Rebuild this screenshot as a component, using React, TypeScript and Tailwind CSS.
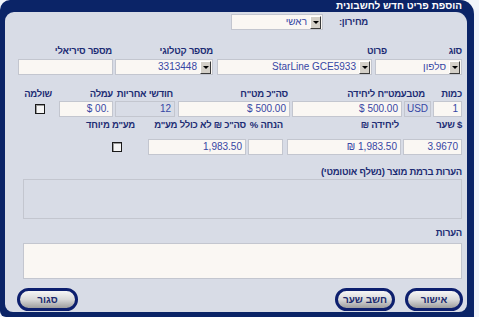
import { ReactNode } from 'react';

const DropBtn = () => (
  <div className="w-[11px] h-[13px] mr-px shrink-0 bg-[#d4d0c8] border border-t-white border-l-white border-r-[#3a3a3a] border-b-[#3a3a3a] flex items-center justify-center">
    <div className="w-0 h-0 border-l-[3px] border-r-[3px] border-t-[3px] border-l-transparent border-r-transparent border-t-black" />
  </div>
);

const Select = ({ className, children }: { className: string; children: ReactNode }) => (
  <div
    className={`h-[16px] shrink-0 border border-[#c3c6cf] bg-[#faf7f3] flex items-center text-[10px] font-normal tracking-normal text-[#3646a4] whitespace-nowrap ${className}`}
  >
    <DropBtn />
    <span className="mr-[3px]">{children}</span>
  </div>
);

const Field = ({
  className,
  children,
  disabled,
}: {
  className: string;
  children?: ReactNode;
  disabled?: boolean;
}) => (
  <div
    className={`h-[16px] shrink-0 border border-[#c3c6cf] flex items-center px-[3px] text-[10px] font-normal tracking-normal text-[#3646a4] whitespace-nowrap ${
      disabled ? 'bg-[#d8dce6]' : 'bg-[#faf7f3]'
    } ${className}`}
  >
    {children}
  </div>
);

const Check = ({ className }: { className: string }) => (
  <div
    className={`w-[10px] h-[10px] shrink-0 self-center border border-[#1a1a1a] bg-[#f4f4f4] shadow-[inset_1px_1px_0_#9a9a9a] ${className}`}
  />
);

const PillButton = ({ className, children }: { className: string; children: ReactNode }) => (
  <div
    className={`h-[23px] rounded-full border-[3px] border-[#0d1f6e] bg-gradient-to-b from-[#f6f6f6] via-[#d9d9d9] to-[#9e9e9e] flex items-center justify-center text-[10px] font-bold tracking-normal text-[#1a2a6e] ${className}`}
  >
    {children}
  </div>
);

export default function App() {
  return (
    <div className="w-[479px] h-[317px] bg-[#f2f5fa] overflow-hidden font-['Liberation_Sans',Arial,sans-serif]">
      <div
        dir="rtl"
        className="w-[474px] h-[317px] bg-[#0b2467] rounded-tl-[10px] rounded-tr-[14px] rounded-bl-[6px] flex flex-col pl-[5px] pr-[7px] pb-[5px]"
      >
        <div className="h-[12px] pr-[5px] text-white font-bold text-[10px] leading-[12px] whitespace-nowrap">
          הוספת פריט חדש לחשבונית
        </div>

        <div className="flex-1 bg-[#d8dce6] rounded-tl-[9px] rounded-tr-[11px] rounded-b-[8px] pr-[5px] flex flex-col text-[9.5px] leading-[12px] tracking-[-0.25px] font-bold text-[#1c2c74] whitespace-nowrap">
          {/* price list */}
          <div className="flex items-center mt-[2px] mr-[94px] h-[16px]">
            <div className="w-[45px]">מחירון:</div>
            <Select className="w-[92px]">ראשי</Select>
          </div>

          {/* row 2 */}
          <div className="flex mt-[15px] h-[12px]">
            <div className="w-[74px]">סוג</div>
            <div className="w-[175px] pr-px">פרוט</div>
            <div className="w-[100px]">מספר קטלוגי</div>
            <div className="pr-px">מספר סיריאלי</div>
          </div>
          <div className="flex mt-[2px] h-[16px]">
            <Select className="w-[87px]">סלפון</Select>
            <Select className="w-[155px] mr-[3px]">StarLine GCE5933</Select>
            <Select className="w-[98px] mr-[4px]">3313448</Select>
            <Field className="w-[95px] mr-[2px]" />
          </div>

          {/* row 3 */}
          <div className="flex mt-[13px] h-[12px]">
            <div className="w-[32px]">כמות</div>
            <div className="w-[28px] pr-[5px]">מטבע</div>
            <div className="w-[112px] pr-px">מט"ח ליחידה</div>
            <div className="w-[115px] pr-[2px]">סה"כ מט"ח</div>
            <div className="w-[62px] pr-[2px]">חודשי אחריות</div>
            <div className="w-[58px]">עמלה</div>
            <div className="pr-[3px]">שולמה</div>
          </div>
          <div className="flex mt-[1px] h-[16px]">
            <Field className="w-[29px]">1</Field>
            <Field className="w-[27px] mr-[2px] justify-center text-[#5a68a8]" disabled>
              USD
            </Field>
            <Field className="w-[110px] mr-[2px]">500.00 $</Field>
            <Field className="w-[112px] mr-[2px]">500.00 $</Field>
            <Field className="w-[60px] mr-[3px]" disabled>
              12
            </Field>
            <Field className="w-[54px] mr-[2px]">.00 $</Field>
            <Check className="mr-[14px]" />
          </div>

          {/* row 4 */}
          <div className="flex mt-[2px] h-[12px]">
            <div className="w-[61px]">
              <span dir="ltr">שער $</span>
            </div>
            <div className="w-[116px] pr-[2px]">
              <span dir="ltr">₪ ליחידה</span>
            </div>
            <div className="w-[39px] pr-[2px]">
              <span dir="ltr">% הנחה</span>
            </div>
            <div className="w-[100px]">סה"כ ₪ לא כולל מע"מ</div>
            <div className="pr-[11px]">מע"מ מיוחד</div>
          </div>
          <div className="flex mt-[8px] h-[16px]">
            <Field className="w-[59px]">3.9670</Field>
            <Field className="w-[114px] mr-[2px]">1,983.50 ₪</Field>
            <Field className="w-[35px] mr-[4px]" />
            <Field className="w-[98px] mr-[2px]">1,983.50</Field>
            <Check className="mr-[26px]" />
          </div>

          {/* product notes */}
          <div className="mt-[11px] h-[12px]">הערות ברמת מוצר (נשלף אוטומטי)</div>
          <div className="mt-[1px] w-[439px] h-[40px] border border-[#c3c6cf] bg-[#d8dce6]" />

          {/* notes */}
          <div className="mt-[8px] h-[12px]">הערות</div>
          <div className="mt-[4px] w-[439px] h-[36px] border border-[#c3c6cf] bg-[#faf7f3]" />

          {/* buttons */}
          <div className="flex justify-between mt-[9px] -mr-px pl-[12px]">
            <div className="flex gap-[10px]">
              <PillButton className="w-[58px]">אישור</PillButton>
              <PillButton className="w-[60px]">חשב שער</PillButton>
            </div>
            <PillButton className="w-[61px]">סגור</PillButton>
          </div>
        </div>
      </div>
    </div>
  );
}
